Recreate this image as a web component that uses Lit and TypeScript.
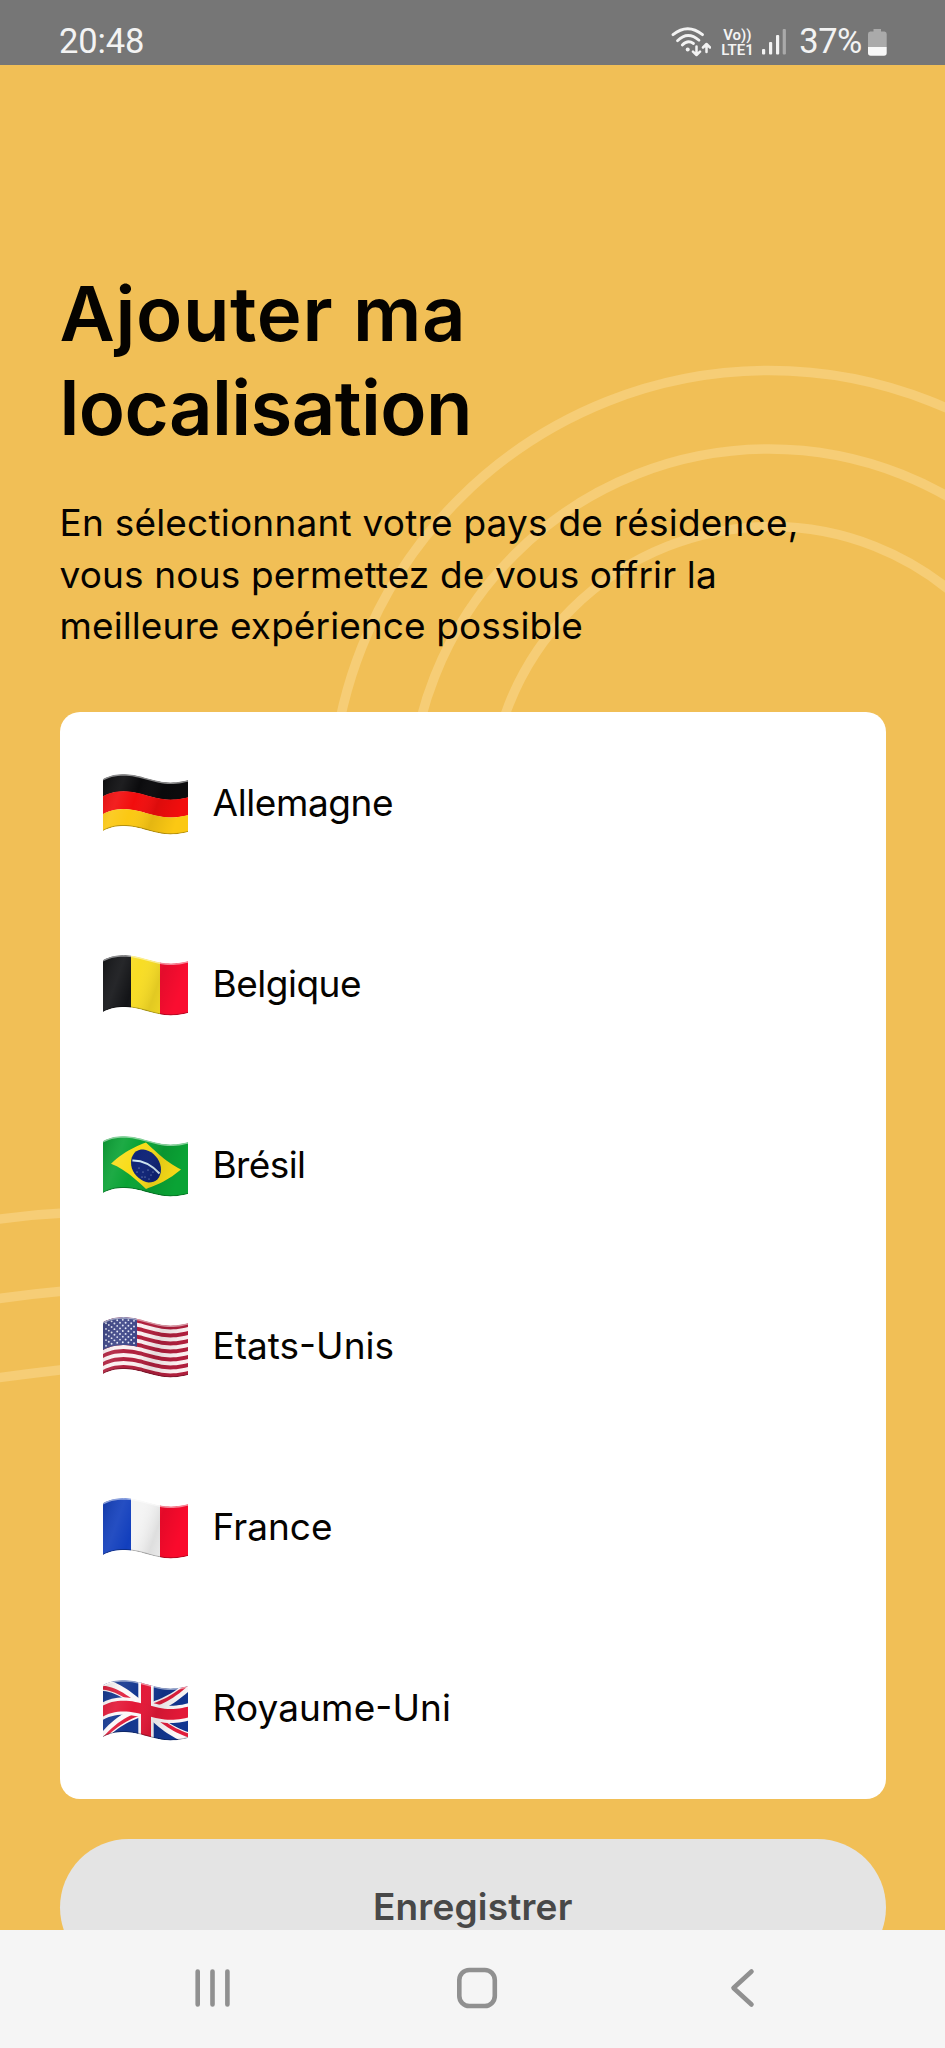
import { LitElement, html, svg, css } from "lit";
import { customElement, property } from "lit/decorators.js";

type Pt = [number, number];

const FLAG_W = 85;
const FLAG_H = 52;

/** Height of the waving upper edge at a given distance from the hoist. */
const wave = (x: number) =>
  5.2 + 4.2 * Math.sin((2 * Math.PI * (x - 44)) / 96) + 1.9 * Math.exp(-x / 6);

/** Turns a polygon of the flat flag into a path that follows the wave. */
const warp = (points: Pt[]) => {
  const out: string[] = [];
  points.forEach(([x0, y0], i) => {
    const [x1, y1] = points[(i + 1) % points.length];
    const n = Math.max(1, Math.ceil(Math.abs(x1 - x0) / 3));
    for (let k = 0; k < n; k++) {
      const x = x0 + ((x1 - x0) * k) / n;
      const y = y0 + ((y1 - y0) * k) / n + wave(x);
      out.push(`${x.toFixed(2)},${y.toFixed(2)}`);
    }
  });
  return `M${out.join("L")}Z`;
};

const area = (x: number, y: number, w: number, h: number, fill: string) =>
  svg`<path d=${warp([[x, y], [x + w, y], [x + w, y + h], [x, y + h]])} fill=${fill} />`;

const poly = (points: Pt[], fill: string) => svg`<path d=${warp(points)} fill=${fill} />`;

const ellipse = (cx: number, cy: number, rx: number, ry: number): Pt[] =>
  Array.from({ length: 36 }, (_, i) => {
    const a = (i * Math.PI) / 18;
    return [cx + rx * Math.cos(a), cy + ry * Math.sin(a)] as Pt;
  });

const vertical = (a: string, b: string, c: string) => [
  area(0, 0, 28, FLAG_H, a),
  area(28, 0, 29, FLAG_H, b),
  area(57, 0, 28, FLAG_H, c),
];

const flags: Record<string, () => unknown> = {
  de: () => [
    area(0, 0, 85, 17.5, "#0b0b0d"),
    area(0, 17.2, 85, 18, "#f20d0d"),
    area(0, 35, 85, 17, "#fbc813"),
  ],
  be: () => vertical("#131417", "#f8dd25", "#fa0d30"),
  fr: () => vertical("#123fbd", "#f4f4f4", "#fa0a2c"),
  br: () => [
    area(0, 0, 85, FLAG_H, "#0aa335"),
    poly([[8, 26], [43, 2.5], [78, 26], [43, 49]], "#f9dc18"),
    poly(ellipse(43, 26, 15, 16), "#0f2478"),
    svg`<path d="M29.4 25.5Q44 25 56.5 38.5" fill="none" stroke="#cfe6f2" stroke-width="1.9" />`,
    [[36, 33], [40, 37], [45, 35], [48, 40], [42, 42], [50, 37], [46, 44], [34, 37], [39, 42]].map(
      ([x, y]) => svg`<circle cx=${x} cy=${y} r=".55" fill="#aebfe6" />`,
    ),
  ],
  us: () => [
    area(0, 0, 85, FLAG_H, "#fbeff0"),
    Array.from({ length: 7 }, (_, i) => area(0, i * 8, 85, 4, "#b01f3d")),
    area(0, 0, 34, 28, "#3d4587"),
    Array.from({ length: 9 }, (_, r) =>
      Array.from({ length: r % 2 ? 5 : 6 }, (_, c) => {
        const x = 3 + c * 5.6 + (r % 2 ? 2.8 : 0);
        return svg`<circle cx=${x} cy=${2.8 + r * 2.8 + wave(x)} r=".95" fill="#e3e6f5" />`;
      }),
    ),
  ],
  gb: () => [
    area(0, 0, 85, FLAG_H, "#12358f"),
    poly([[0, 0], [9, 0], [85, 46], [85, 52], [76, 52], [0, 6]], "#fbf7f8"),
    poly([[85, 0], [76, 0], [0, 46], [0, 52], [9, 52], [85, 6]], "#fbf7f8"),
    poly([[0, 0.8], [0, 4.8], [36, 26.5], [43, 26.5]], "#e01e3c"),
    poly([[85, 51.2], [85, 47.2], [49, 25.5], [42, 25.5]], "#e01e3c"),
    poly([[85, 0], [79, 0], [36, 26], [43, 26]], "#e01e3c"),
    poly([[0, 52], [6, 52], [49, 26], [42, 26]], "#e01e3c"),
    area(35.3, 0, 15.4, FLAG_H, "#fbf7f8"),
    area(0, 17.3, 85, 17.4, "#fbf7f8"),
    area(38, 0, 10, FLAG_H, "#e31837"),
    area(0, 20.6, 85, 10.8, "#e31837"),
  ],
};

@customElement("flag-icon")
class FlagIcon extends LitElement {
  @property() code = "de";

  static styles = css`
    :host {
      display: block;
      width: 85px;
      height: 63px;
    }
    svg {
      display: block;
    }
  `;

  render() {
    const outline = warp([[0, 0], [FLAG_W, 0], [FLAG_W, FLAG_H], [0, FLAG_H]]);
    return html`<svg width="85" height="63" viewBox="0 0 85 63">
      <defs>
        <clipPath id="cloth"><path d=${outline} /></clipPath>
        <linearGradient id="folds" x1="0" y1="0" x2="1" y2=".25">
          <stop offset="0" stop-color="#000" stop-opacity=".13" />
          <stop offset=".25" stop-color="#fff" stop-opacity=".08" />
          <stop offset=".45" stop-color="#fff" stop-opacity="0" />
          <stop offset=".72" stop-color="#000" stop-opacity=".09" />
          <stop offset="1" stop-color="#000" stop-opacity="0" />
        </linearGradient>
      </defs>
      <g clip-path="url(#cloth)">
        ${flags[this.code]()}
        <path d=${outline} fill="url(#folds)" />
        <path d=${warp([[0, 0], [85, 0], [85, 1.6], [0, 1.6]])} fill="#fff" opacity=".5" />
        <path d=${warp([[0, 50.9], [85, 50.9], [85, 52], [0, 52]])} fill="#000" opacity=".28" />
      </g>
    </svg>`;
  }
}

@customElement("status-bar")
class StatusBar extends LitElement {
  static styles = css`
    :host {
      display: flex;
      justify-content: space-between;
      box-sizing: border-box;
      height: 64.5px;
      padding: 17px 58px 0 59px;
      background: #767676;
      color: #f3f3f3;
      font-family: Roboto, sans-serif;
    }
    .time,
    .percent {
      font-size: 34.5px;
      line-height: 48px;
      letter-spacing: -0.1px;
    }
    .percent {
      letter-spacing: -0.4px;
    }
    .right {
      display: flex;
      align-items: flex-start;
    }
    .wifi {
      margin: 9px 10px 0 0;
    }
    .volte {
      display: flex;
      flex-direction: column;
      width: 34px;
      margin: 11px 7px 0 0;
      font-size: 15px;
      font-weight: 600;
      line-height: 15px;
      white-space: nowrap;
    }
    .vo {
      padding-left: 2px;
    }
    .bars {
      margin: 12px 12px 0 0;
    }
    .battery {
      margin: 12px 0 0 6px;
    }
  `;

  render() {
    return html`
      <span class="time">20:48</span>
      <div class="right">
        <svg class="wifi" width="40" height="31" viewBox="0 0 40 31">
          <g fill="none" stroke="#f3f3f3" stroke-width="2.8" stroke-linecap="round" stroke-linejoin="round">
            <path d="M2 8.7Q16.7-3.3 31.5 8.7" />
            <path d="M6.5 14.7Q16.7 4.5 28 14.2" />
            <path d="M11.3 19Q16.7 13.5 22.5 17.5" />
            <path stroke-width="2.5" d="M25.5 20.5V28.5M22 25.7L25.5 29L29 25.7M35.5 26V18.5M32 21.5L35.5 18L39 21.5" />
          </g>
          <circle cx="16.7" cy="23.6" r="2" fill="#f3f3f3" />
        </svg>
        <span class="volte"><span class="vo">Vo))</span><span>LTE1</span></span>
        <svg class="bars" width="25" height="26" viewBox="0 0 25 26">
          <g fill="#f3f3f3">
            <rect x="0" y="20" width="3.2" height="5.5" rx="1" />
            <rect x="7" y="13" width="3.2" height="12.5" rx="1" />
            <rect x="14" y="6" width="3.2" height="19.5" rx="1" />
            <rect x="20.7" y="0" width="3.2" height="25.5" rx="1" opacity=".42" />
          </g>
        </svg>
        <span class="percent">37%</span>
        <svg class="battery" width="19" height="27" viewBox="0 0 19 27">
          <path d="M5.5 0H13V2.5H16.5Q18.7 2.5 18.7 5V18H0V5Q0 2.5 2.2 2.5H5.5Z" fill="#aaa" />
          <path d="M0 18H18.7V24Q18.7 26.8 16 26.8H2.7Q0 26.8 0 24Z" fill="#f8f8f8" />
        </svg>
      </div>
    `;
  }
}

@customElement("nav-bar")
class NavBar extends LitElement {
  static styles = css`
    :host {
      display: flex;
      align-items: center;
      justify-content: space-between;
      box-sizing: border-box;
      height: 118.5px;
      padding: 0 188px 2px 192px;
      background: #f5f5f5;
    }
    svg {
      fill: none;
      stroke: #909090;
      stroke-width: 4.6;
      stroke-linecap: round;
      stroke-linejoin: round;
    }
  `;

  render() {
    return html`
      <svg width="41" height="42" viewBox="0 0 41 42">
        <path d="M5.7 4.5V37.5M20.5 4.5V37.5M35.4 4.5V37.5" />
      </svg>
      <svg width="50" height="42" viewBox="0 0 50 42">
        <rect x="3.3" y="3" width="35.5" height="36" rx="10" />
      </svg>
      <svg width="28" height="42" viewBox="0 0 28 42">
        <path d="M22.5 4.5L4.5 21L22.5 37.5" />
      </svg>
    `;
  }
}

const countries = [
  { code: "de", name: "Allemagne", tracking: -0.4 },
  { code: "be", name: "Belgique", tracking: -0.5 },
  { code: "br", name: "Brésil", tracking: -0.6 },
  { code: "us", name: "Etats-Unis", tracking: 0 },
  { code: "fr", name: "France", tracking: 0 },
  { code: "gb", name: "Royaume-Uni", tracking: 0.12 },
];

@customElement("app-root")
class AppRoot extends LitElement {
  static styles = css`
    :host {
      display: flex;
      flex-direction: column;
      height: 2048px;
      overflow: hidden;
      font-family: Inter, "Liberation Sans", sans-serif;
      color: #050300;
    }
    .page {
      position: relative;
      flex: 1;
      min-height: 0;
      overflow: hidden;
      box-sizing: border-box;
      padding: 201.5px 59px 0 59.5px;
      background: #f1bf56;
    }
    .rings {
      position: absolute;
      left: 0;
      top: -64.5px;
    }
    .content {
      position: relative;
    }
    h1 {
      margin: 0;
      font-size: 76px;
      font-weight: 600;
      line-height: 94px;
    }
    .line {
      display: block;
      white-space: nowrap;
    }
    .t1 {
      letter-spacing: 0.65px;
    }
    .t2 {
      letter-spacing: -0.6px;
    }
    .p1 {
      letter-spacing: 0.21px;
    }
    .p2 {
      letter-spacing: 0.15px;
    }
    .p3 {
      letter-spacing: 0.09px;
    }
    p {
      margin: 43px 0 0;
      font-size: 37px;
      line-height: 51.5px;
    }
    .card {
      margin: 60.5px 0 0;
      padding: 0;
      list-style: none;
      border-radius: 20px;
      background: #fff;
    }
    .row {
      display: flex;
      align-items: center;
      gap: 25px;
      height: 181.1px;
      padding-left: 43px;
    }
    .row flag-icon {
      margin-top: 4px;
    }
    .name {
      font-size: 37px;
      line-height: 46px;
      font-feature-settings: "case";
    }
    .save {
      display: block;
      width: 100%;
      height: 137px;
      margin-top: 40px;
      padding: 0;
      border: 0;
      border-radius: 69px;
      background: #e4e4e4;
      color: #484848;
      font: 600 37px/46px Inter, sans-serif;
      letter-spacing: 0.2px;
    }
  `;

  render() {
    return html`
      <status-bar></status-bar>
      <main class="page">
        <svg class="rings" width="945" height="2048" viewBox="0 0 945 2048">
          <g fill="none" stroke="#f6cd76" stroke-width="9.5">
            <path d="M331 808.5A438 438 0 0 1 1207 808.5" />
            <path d="M409.5 808.5A359.5 359.5 0 0 1 1128.5 808.5" />
            <path d="M489 808.5A282 282 0 0 1 1053 808.5" />
            <path d="M-4 1219.5Q30 1214.5 64 1213" />
            <path d="M-4 1299Q30 1294 64 1291" />
            <path d="M-4 1378Q30 1373.5 64 1369.5" />
          </g>
        </svg>
        <div class="content">
          <h1>
            <span class="line t1">Ajouter ma</span>
            <span class="line t2">localisation</span>
          </h1>
          <p>
            <span class="line p1">En sélectionnant votre pays de résidence,</span>
            <span class="line p2">vous nous permettez de vous offrir la</span>
            <span class="line p3">meilleure expérience possible</span>
          </p>
          <ul class="card">
            ${countries.map(
              (c) => html`<li class="row">
                <flag-icon .code=${c.code}></flag-icon>
                <span class="name" style="letter-spacing:${c.tracking}px">${c.name}</span>
              </li>`,
            )}
          </ul>
          <button class="save">Enregistrer</button>
        </div>
      </main>
      <nav-bar></nav-bar>
    `;
  }
}
